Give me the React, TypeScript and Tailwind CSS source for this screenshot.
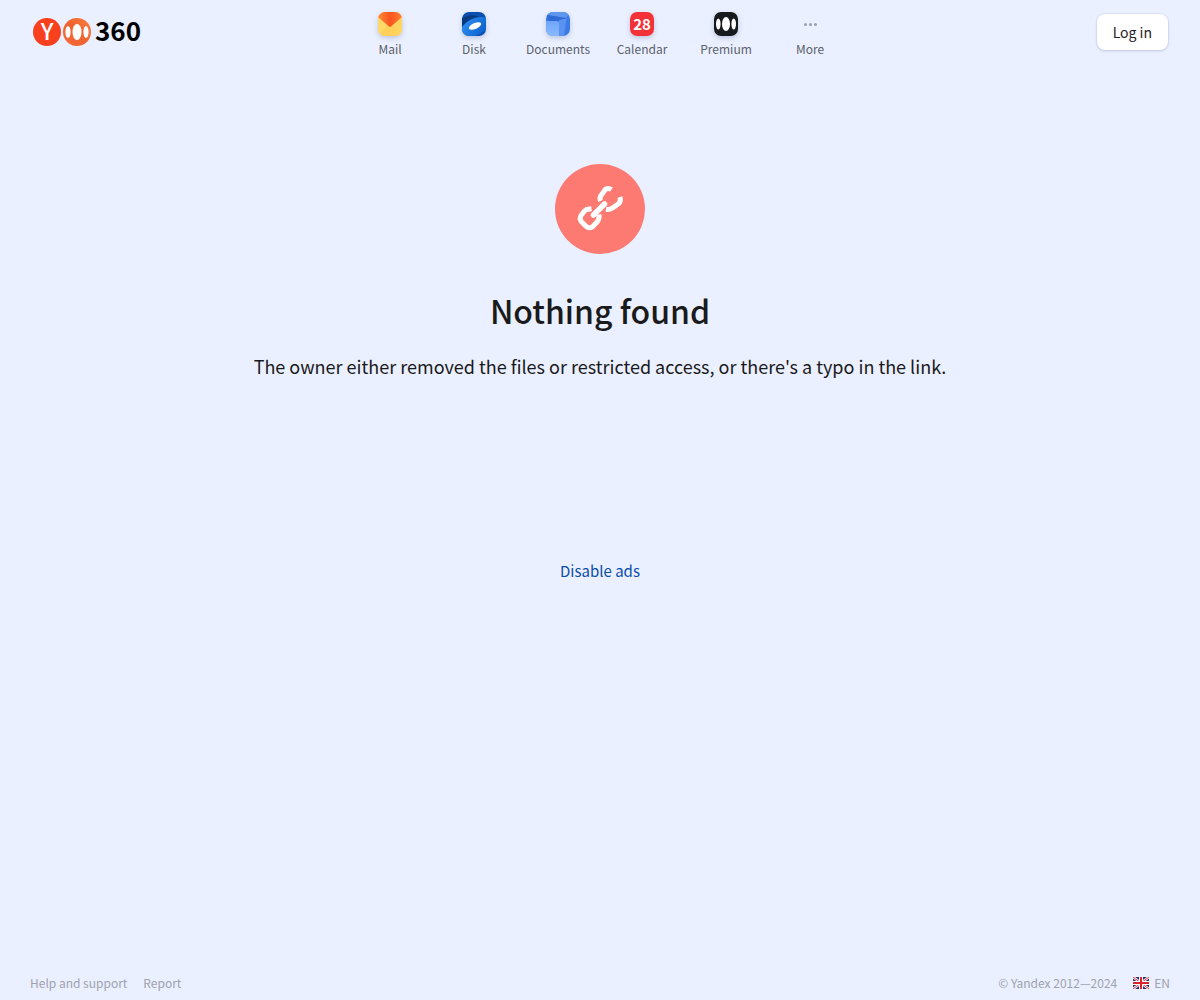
import type { ReactNode } from 'react';

interface Service {
  name: string;
  icon: ReactNode;
}

const Logo = () => (
  <a href="#" aria-label="Yandex 360" className="flex items-center gap-1 pl-px text-black">
    <svg width="58" height="40" viewBox="0 0 58 40" aria-hidden="true">
      <defs>
        <linearGradient id="logo360" x1="0" y1="1" x2="1" y2="0">
          <stop offset="0" stopColor="#fa6a3c" />
          <stop offset="0.5" stopColor="#f0622f" />
          <stop offset="1" stopColor="#f8803f" />
        </linearGradient>
      </defs>
      <circle cx="14" cy="20" r="14" fill="#f8401f" />
      <text x="14" y="28" textAnchor="middle" fill="#fff" className="text-[23px] font-medium">
        Y
      </text>
      <circle cx="44" cy="20" r="14" fill="url(#logo360)" />
      <ellipse cx="44" cy="20" rx="4.5" ry="8" fill="#fff" />
      <ellipse cx="35" cy="20" rx="2.6" ry="6" fill="#fff" />
      <ellipse cx="53" cy="20" rx="2.6" ry="6" fill="#fff" />
    </svg>
    <span className="pb-1 text-[26px] leading-7 font-bold">360</span>
  </a>
);

const MailIcon = () => (
  <svg width="24" height="24" viewBox="0 0 24 24" aria-hidden="true">
    <defs>
      <clipPath id="mailClip"><rect width="24" height="24" rx="7" /></clipPath>
      <linearGradient id="mailFlap" x1="0" y1="0" x2="1" y2="0">
        <stop offset="0" stopColor="#ff8a3c" />
        <stop offset="0.5" stopColor="#f9541f" />
        <stop offset="1" stopColor="#ff7d35" />
      </linearGradient>
    </defs>
    <g clipPath="url(#mailClip)">
      <rect width="24" height="24" fill="#ffcb4e" />
      <path d="M0 4 12 15 0 24Z" fill="#ffd968" />
      <path d="M24 4 12 15 24 24Z" fill="#ffd561" />
      <path d="M0 24 9 14h6l9 10Z" fill="#ffd05a" />
      <path d="M0 0h24v5L13 14.6q-1 .8-2 0L0 5Z" fill="url(#mailFlap)" />
    </g>
  </svg>
);

const DiskIcon = () => (
  <svg width="24" height="24" viewBox="0 0 24 24" aria-hidden="true">
    <defs>
      <clipPath id="diskClip"><rect width="24" height="24" rx="7" /></clipPath>
      <linearGradient id="diskPlate" x1="0" y1="0" x2="1" y2="1">
        <stop offset="0" stopColor="#2f93f5" />
        <stop offset="1" stopColor="#0757c4" />
      </linearGradient>
    </defs>
    <g clipPath="url(#diskClip)">
      <rect width="24" height="24" fill="#0a4fb0" />
      <path d="M0 6Q8 1 18 5L10 9 0 14Z" fill="#083a82" />
      <ellipse cx="13" cy="15" rx="15" ry="8.5" transform="rotate(-25 13 15)" fill="url(#diskPlate)" />
      <ellipse cx="13" cy="14" rx="6.6" ry="3" transform="rotate(-24 13 14)" fill="#fff" />
    </g>
  </svg>
);

const DocumentsIcon = () => (
  <svg width="24" height="24" viewBox="0 0 24 24" aria-hidden="true">
    <defs>
      <clipPath id="docsClip"><rect width="24" height="24" rx="7" /></clipPath>
      <linearGradient id="docsFront" x1="0" y1="0" x2="0" y2="1">
        <stop offset="0" stopColor="#6ea5fb" />
        <stop offset="1" stopColor="#8bb9ff" />
      </linearGradient>
    </defs>
    <g clipPath="url(#docsClip)">
      <rect width="24" height="24" fill="#3c7be6" />
      <path d="M0 0h24L20 6 0 3Z" fill="#5d95ef" />
      <path d="M1 3 20 6 18 24H8Z" fill="#3069d4" />
      <path d="M13 8 20.5 6.5 18 24H12Z" fill="#5a92f2" />
      <path d="M0 9h11q2 0 2 2v13H0Z" fill="url(#docsFront)" />
    </g>
  </svg>
);

const CalendarIcon = () => (
  <span className="flex size-6 items-center justify-center rounded-[7px] bg-[#f33238] text-[15px] leading-6 font-bold text-white">
    28
  </span>
);

const PremiumIcon = () => (
  <svg width="24" height="24" viewBox="0 0 24 24" aria-hidden="true">
    <rect width="24" height="24" rx="7" fill="#171a1c" />
    <ellipse cx="12" cy="12" rx="4" ry="7" fill="#fff" />
    <ellipse cx="4.3" cy="12" rx="2.3" ry="5.5" fill="#fff" />
    <ellipse cx="19.7" cy="12" rx="2.3" ry="5.5" fill="#fff" />
  </svg>
);

const MoreIcon = () => (
  <svg width="24" height="24" viewBox="0 0 24 24" fill="#9a9eae" aria-hidden="true">
    <circle cx="7.5" cy="12.5" r="1.5" />
    <circle cx="12.5" cy="12.5" r="1.5" />
    <circle cx="17.5" cy="12.5" r="1.5" />
  </svg>
);

const services: Service[] = [
  { name: 'Mail', icon: <MailIcon /> },
  { name: 'Disk', icon: <DiskIcon /> },
  { name: 'Documents', icon: <DocumentsIcon /> },
  { name: 'Calendar', icon: <CalendarIcon /> },
  { name: 'Premium', icon: <PremiumIcon /> },
];

const itemClass = 'flex w-21 flex-col items-center gap-1 text-xs leading-[18px] text-[#5c606b]';

const Header = () => (
  <header className="flex h-16 items-center px-8">
    <div className="flex flex-1">
      <Logo />
    </div>
    <nav className="flex pt-1.5">
      {services.map(({ name, icon }) => (
        <a key={name} href="#" className={itemClass}>
          <span className="rounded-[7px] shadow-[0_2px_5px_rgba(60,70,120,0.25)]">{icon}</span>
          {name}
        </a>
      ))}
      <button type="button" className={itemClass}>
        <MoreIcon />
        More
      </button>
    </nav>
    <div className="flex flex-1 justify-end">
      <button
        type="button"
        className="h-9 rounded-lg bg-white px-4 text-sm leading-5 text-[#1f2124] shadow-[0_0_0_1px_rgba(60,70,120,0.06),0_1px_3px_rgba(60,70,120,0.2)]"
      >
        Log in
      </button>
    </div>
  </header>
);

const BrokenLink = () => (
  <svg width="90" height="90" viewBox="0 0 90 90" aria-hidden="true">
    <circle cx="45" cy="45" r="45" fill="#fc7a72" />
    <g fill="none" stroke="#fff" strokeWidth="5" strokeLinejoin="round">
      <path d="M36.5 44.8 33 45.2Q31 45.5 29.5 47L26 51.5Q24.2 54.5 26.3 57.5L31 62.3Q34 64.8 37.5 62.8L42.5 57.5Q44.5 55 44 50.5" />
      <path d="M38.5 51 49.5 40" strokeWidth="5.5" strokeLinecap="round" />
      <path d="M56.5 25.5Q53.5 23.5 50.5 25.2L46 31.5Q44.3 34 45.5 37" />
      <path d="M51 45.3Q54.5 46 57.5 44L63.5 39.8Q66.3 37.5 65 33" />
    </g>
  </svg>
);

const Flag = () => (
  <svg width="16" height="12" viewBox="0 0 16 12" aria-hidden="true">
    <rect width="16" height="12" fill="#2b2f63" />
    <path d="M0 0 16 12M16 0 0 12" stroke="#fff" strokeWidth="2.5" />
    <path d="M0 0 16 12M16 0 0 12" stroke="#d8354a" strokeWidth="1" />
    <path d="M8 0V12M0 6H16" stroke="#fff" strokeWidth="4" />
    <path d="M8 0V12M0 6H16" stroke="#d8232f" strokeWidth="2" />
  </svg>
);

const Footer = () => (
  <footer className="flex items-center justify-between px-[30px] pb-[7px] text-xs leading-5 text-[#9fa2ad]">
    <div className="flex gap-4">
      <a href="#">Help and support</a>
      <a href="#">Report</a>
    </div>
    <div className="flex gap-4">
      <span>© Yandex 2012—2024</span>
      <button type="button" className="flex items-center gap-[5px]">
        <Flag />
        EN
      </button>
    </div>
  </footer>
);

export default function App() {
  return (
    <div className="flex min-h-screen flex-col bg-[#eaf0ff] font-['Noto_Sans_CJK_SC',sans-serif]">
      <Header />
      <main className="flex flex-1 flex-col items-center px-4 pt-25 text-center text-[#1a1a1c]">
        <BrokenLink />
        <h1 className="mt-9 text-[32px] leading-10 font-medium">Nothing found</h1>
        <p className="mt-6 text-lg leading-6">
          The owner either removed the files or restricted access, or there's a typo in the link.
        </p>
        <a href="#" className="mt-45 text-[15px] leading-[26px] text-[#0a4da8]">
          Disable ads
        </a>
      </main>
      <Footer />
    </div>
  );
}
